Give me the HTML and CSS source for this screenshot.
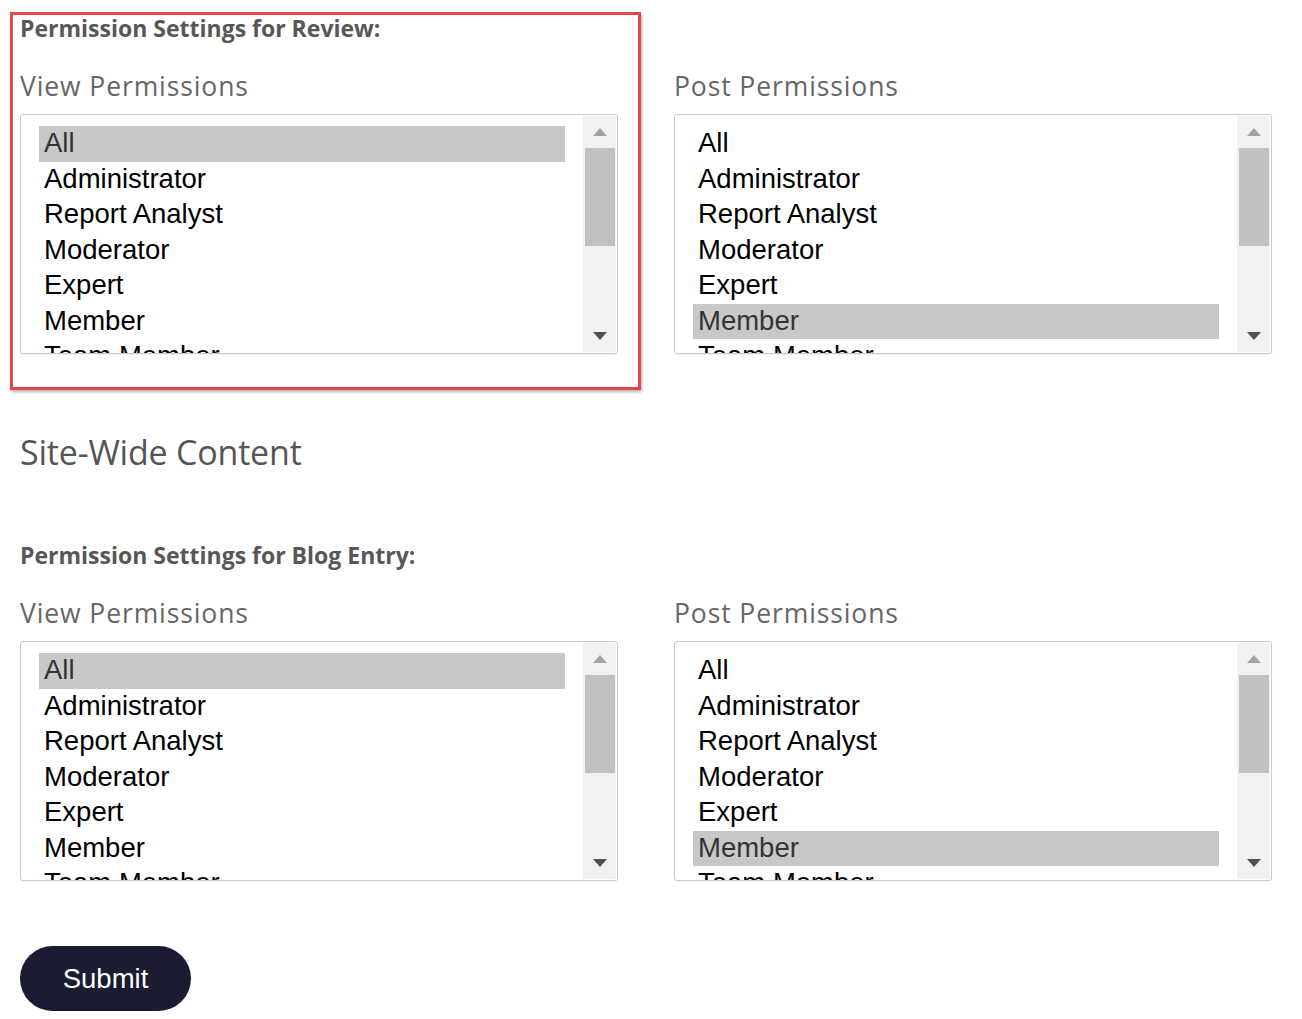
FILE: index.html
```html
<!DOCTYPE html>
<html lang="en">
<head>
    <meta charset="UTF-8">
    <meta name="viewport" content="width=device-width, initial-scale=1.0">
    <title>Permissions</title>
    <link rel="stylesheet" href="styles.css">
</head>
<body>
  <div class="page">
    <section class="group first">
      <div class="callout"></div>
      <h4 class="groupTitle">Permission Settings for Review:</h4>
      <div class="permGrid">
        <div class="permCol">
          <label class="permLabel">View Permissions</label>
          <div class="listbox">
            <ul class="options">
              <li class="selected">All</li>
              <li>Administrator</li>
              <li>Report Analyst</li>
              <li>Moderator</li>
              <li>Expert</li>
              <li>Member</li>
              <li>Team Member</li>
            </ul>
            <div class="scrollbar">
              <span class="arrow up"></span>
              <span class="thumb"></span>
              <span class="track"></span>
              <span class="arrow down"></span>
            </div>
          </div>
        </div>
        <div class="permCol">
          <label class="permLabel">Post Permissions</label>
          <div class="listbox">
            <ul class="options">
              <li>All</li>
              <li>Administrator</li>
              <li>Report Analyst</li>
              <li>Moderator</li>
              <li>Expert</li>
              <li class="selected">Member</li>
              <li>Team Member</li>
            </ul>
            <div class="scrollbar">
              <span class="arrow up"></span>
              <span class="thumb"></span>
              <span class="track"></span>
              <span class="arrow down"></span>
            </div>
          </div>
        </div>
      </div>
    </section>

    <h2 class="siteTitle">Site-Wide Content</h2>

    <section class="group">
      <h4 class="groupTitle">Permission Settings for Blog Entry:</h4>
      <div class="permGrid">
        <div class="permCol">
          <label class="permLabel">View Permissions</label>
          <div class="listbox">
            <ul class="options">
              <li class="selected">All</li>
              <li>Administrator</li>
              <li>Report Analyst</li>
              <li>Moderator</li>
              <li>Expert</li>
              <li>Member</li>
              <li>Team Member</li>
            </ul>
            <div class="scrollbar">
              <span class="arrow up"></span>
              <span class="thumb"></span>
              <span class="track"></span>
              <span class="arrow down"></span>
            </div>
          </div>
        </div>
        <div class="permCol">
          <label class="permLabel">Post Permissions</label>
          <div class="listbox">
            <ul class="options">
              <li>All</li>
              <li>Administrator</li>
              <li>Report Analyst</li>
              <li>Moderator</li>
              <li>Expert</li>
              <li class="selected">Member</li>
              <li>Team Member</li>
            </ul>
            <div class="scrollbar">
              <span class="arrow up"></span>
              <span class="thumb"></span>
              <span class="track"></span>
              <span class="arrow down"></span>
            </div>
          </div>
        </div>
      </div>
    </section>

    <button type="button" class="submit">Submit</button>
  </div>
</body>
</html>
```

FILE: styles.css
```css
body {
  margin: 0;
  background: #fff;
  font-family: "Open Sans", Lato, sans-serif;
}
.page {
  padding: 14px 20px 0 20px;
}
.group {
  position: relative;
}
.callout {
  position: absolute;
  left: -10px;
  top: -2px;
  width: 625px;
  height: 372px;
  border: 3px solid #e2474d;
  box-shadow: 1px 2px 3px rgba(0, 0, 0, .3);
  pointer-events: none;
}
.groupTitle {
  margin: 0;
  font-size: 23px;
  line-height: 28px;
  font-weight: bold;
  letter-spacing: 0;
  color: #575757;
}
.permGrid {
  display: grid;
  grid-template-columns: 598px 598px;
  column-gap: 56px;
  margin-top: 28px;
}
.permCol {
  display: flex;
  flex-direction: column;
}
.permLabel {
  font-size: 26.5px;
  line-height: 32px;
  letter-spacing: 0.9px;
  color: #666;
  margin-bottom: 12px;
}
.listbox {
  display: flex;
  height: 240px;
  box-sizing: border-box;
  border: 1px solid #cacaca;
  border-radius: 3px;
  overflow: hidden;
  box-shadow: 0 1px 1px rgba(0, 0, 0, .06);
}
.options {
  flex: 1;
  list-style: none;
  margin: 0;
  padding: 11px 18px 0 18px;
  overflow: hidden;
  font-family: "Liberation Sans", Arial, sans-serif;
  font-size: 27.5px;
  color: #000;
}
.options li {
  height: 35.5px;
  line-height: 34px;
  padding: 0 5px;
  white-space: nowrap;
}
.options .selected {
  background: #c8c8c8;
  color: #333;
}
.scrollbar {
  width: 33px;
  margin: 1px 1px 1px 0;
  background: #f1f1f1;
  display: flex;
  flex-direction: column;
  align-items: center;
}
.arrow {
  height: 32px;
  width: 100%;
  display: flex;
  align-items: center;
  justify-content: center;
}
.arrow::before {
  content: "";
  width: 0;
  height: 0;
  border-left: 7px solid transparent;
  border-right: 7px solid transparent;
}
.arrow.up::before {
  border-bottom: 8px solid #a3a3a3;
}
.arrow.down::before {
  border-top: 8px solid #505050;
}
.thumb {
  width: 30px;
  height: 98px;
  background: #c1c1c1;
}
.track {
  flex: 1;
}
.siteTitle {
  margin: 77px 0 68px 0;
  font-size: 34px;
  line-height: 42px;
  font-weight: normal;
  letter-spacing: -0.2px;
  color: #555;
}
.submit {
  margin-top: 65px;
  width: 171px;
  height: 65px;
  border: 0;
  border-radius: 33px;
  background: #1b1b31;
  color: #fff;
  font-family: "Liberation Sans", Arial, sans-serif;
  font-size: 27.5px;
  padding: 0;
}
```
